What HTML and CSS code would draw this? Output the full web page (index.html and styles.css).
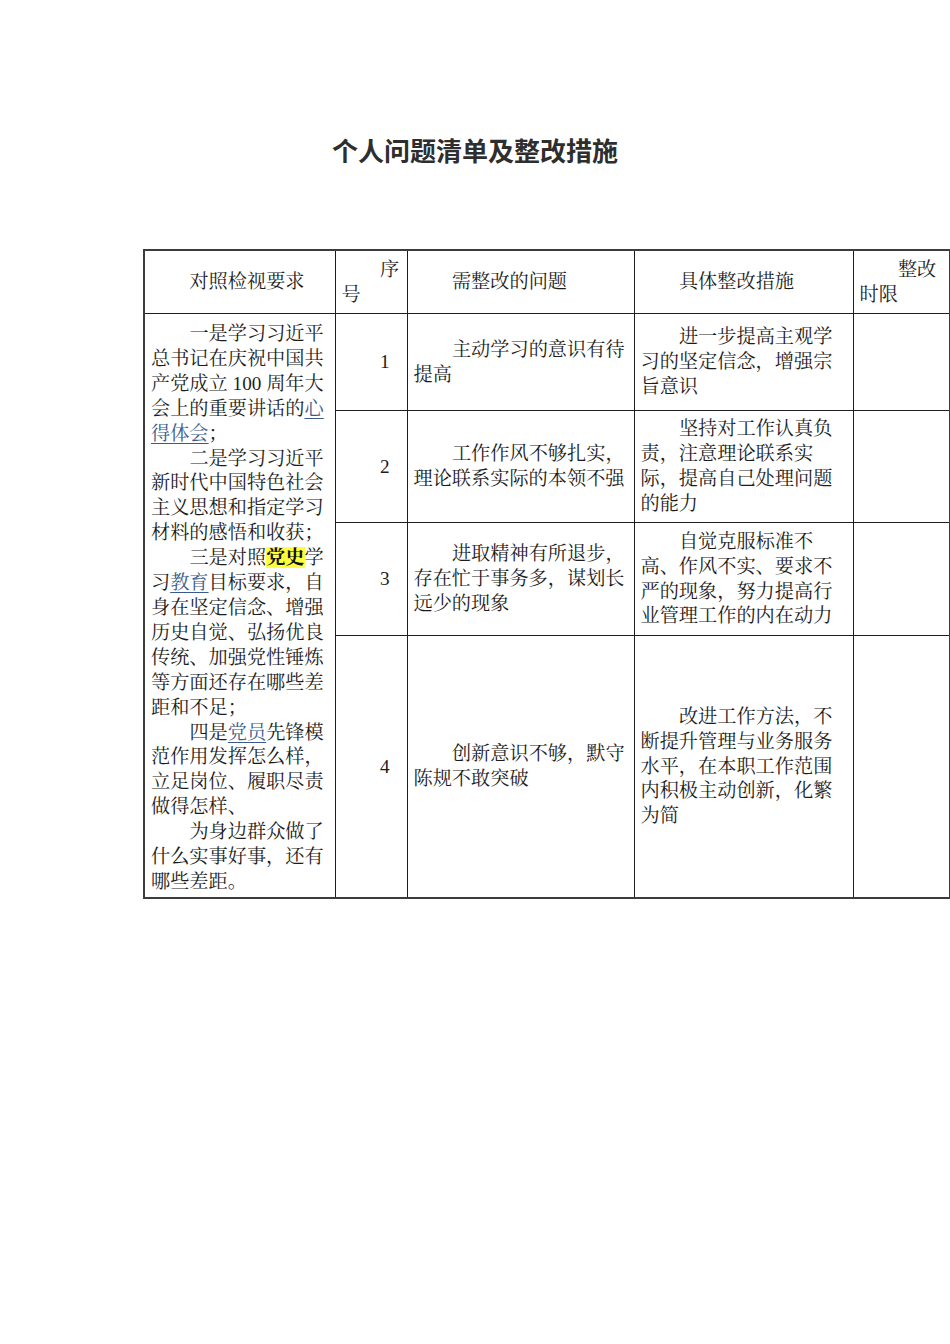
FILE: index.html
```html
<!DOCTYPE html>
<html lang="zh-CN">
<head>
<meta charset="utf-8">
<title>个人问题清单及整改措施</title>
<link rel="stylesheet" href="styles.css">
</head>
<body>
<div class="page">
  <h1 class="title">个人问题清单及整改措施</h1>
  <table class="sheet">
    <colgroup>
      <col class="c1"><col class="c2"><col class="c3"><col class="c4"><col class="c5">
    </colgroup>
    <tr class="head">
      <td><p>对照检视要求</p></td>
      <td><p>序<br><span class="noind">号</span></p></td>
      <td><p>需整改的问题</p></td>
      <td><p>具体整改措施</p></td>
      <td><p>整改<br><span class="noind">时限</span></p></td>
    </tr>
    <tr class="r1">
      <td rowspan="4" class="req">
        <p>一是学习习近平<br>总书记在庆祝中国共<br>产党成立 <span class="num">100</span> 周年大<br>会上的重要讲话的<a href="#">心<br>得体会</a>；</p>
        <p>二是学习习近平<br>新时代中国特色社会<br>主义思想和指定学习<br>材料的感悟和收获；</p>
        <p>三是对照<mark>党史</mark>学<br>习<a href="#">教育</a>目标要求，自<br>身在坚定信念、增强<br>历史自觉、弘扬优良<br>传统、加强党性锤炼<br>等方面还存在哪些差<br>距和不足；</p>
        <p>四是<a href="#">党员</a>先锋模<br>范作用发挥怎么样，<br>立足岗位、履职尽责<br>做得怎样、</p>
        <p>为身边群众做了<br>什么实事好事，还有<br>哪些差距。</p>
      </td>
      <td class="mid"><p class="num">1</p></td>
      <td class="mid"><p>主动学习的意识有待<br>提高</p></td>
      <td class="mid"><p>进一步提高主观学<br>习的坚定信念，增强宗<br>旨意识</p></td>
      <td></td>
    </tr>
    <tr class="r2">
      <td class="mid"><p class="num">2</p></td>
      <td class="mid"><p>工作作风不够扎实，<br>理论联系实际的本领不强</p></td>
      <td class="mid"><p>坚持对工作认真负<br>责，注意理论联系实<br>际，提高自己处理问题<br>的能力</p></td>
      <td></td>
    </tr>
    <tr class="r3">
      <td class="mid"><p class="num">3</p></td>
      <td class="mid"><p>进取精神有所退步，<br>存在忙于事务多，谋划长<br>远少的现象</p></td>
      <td class="mid"><p>自觉克服标准不<br>高、作风不实、要求不<br>严的现象，努力提高行<br>业管理工作的内在动力</p></td>
      <td></td>
    </tr>
    <tr class="r4">
      <td class="mid"><p class="num">4</p></td>
      <td class="mid"><p>创新意识不够，默守<br>陈规不敢突破</p></td>
      <td class="mid"><p>改进工作方法，不<br>断提升管理与业务服务<br>水平，在本职工作范围<br>内积极主动创新，化繁<br>为简</p></td>
      <td></td>
    </tr>
  </table>
</div>
</body>
</html>
```

FILE: styles.css
```css
html, body {
  margin: 0;
  padding: 0;
  background: #ffffff;
}

.page {
  width: 950px;
  height: 1344px;
  padding-top: 132px;
  box-sizing: border-box;
}

.title {
  margin: 0;
  text-align: center;
  font-family: "Noto Sans CJK SC", "Noto Sans", sans-serif;
  font-weight: 700;
  font-size: 26px;
  line-height: 36px;
  color: #2e2e2e;
}

.sheet {
  margin: 81px 0 0 143px;
  border-collapse: collapse;
  table-layout: fixed;
  width: 806px;
  border: 2px solid #3c3c3c;
  font-family: "Liberation Serif", "Noto Serif CJK SC", "Noto Sans CJK SC", serif;
  font-size: 19.2px;
  line-height: 24.9px;
  color: #1c1c1c;
}

.c1 { width: 191px; }
.c2 { width: 72px; }
.c3 { width: 227px; }
.c4 { width: 219px; }
.c5 { width: 97px; }

.sheet td {
  border: 1px solid #1e1e1e;
  padding: 1px 6px 0 6px;
  vertical-align: middle;
  overflow: visible;
  white-space: nowrap;
}

.sheet p {
  margin: 0;
  text-indent: 2em;
  text-align: left;
}

.noind {
  display: inline;
}

.head td { height: 61px; }
.r1 td { height: 95px; }
.r2 td { height: 110px; }
.r3 td { height: 111px; }
.r4 td { height: 260px; }

.sheet td.req {
  vertical-align: top;
  padding-top: 8px;
}

.num {
  font-family: "Liberation Serif", serif;
}

.sheet a {
  color: #3b5a8a;
  text-decoration: underline;
  text-underline-offset: 3px;
}

.sheet mark {
  background: #ffff3c;
  color: #111;
  font-weight: 700;
}
```
